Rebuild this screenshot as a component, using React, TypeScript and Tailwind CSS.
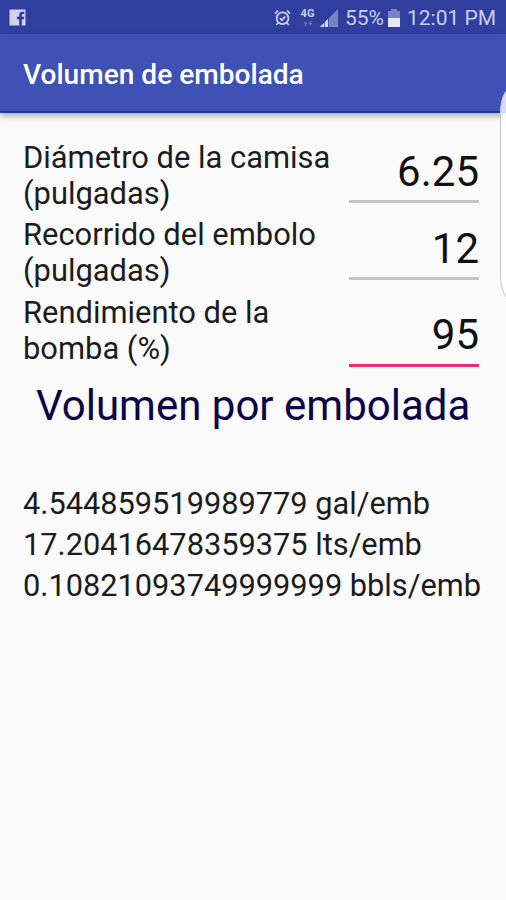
const ROWS = [
  { lines: ['Diámetro de la camisa', '(pulgadas)'], value: '6.25', height: 'h-[77px]', field: 'h-[62px] pt-[6px]', line: 'bg-[#c4c4c5]' },
  { lines: ['Recorrido del embolo', '(pulgadas)'], value: '12', height: 'h-[78px]', field: 'h-[62px] pt-[6px]', line: 'bg-[#c4c4c5]' },
  { lines: ['Rendimiento de la', 'bomba (%)'], value: '95', height: 'h-[73px]', field: 'h-[71px] pt-[14px]', line: 'bg-[#f02a72]' },
];

const RESULTS = ['4.544859519989779 gal/emb', '17.20416478359375 lts/emb', '0.10821093749999999 bbls/emb'];

function StatusBar() {
  return (
    <div className="flex h-[34px] items-center justify-between bg-[#303f9f] pt-[1px] pr-[10px] pl-[9px] text-[#c9cdee]">
      <svg width="17" height="17" viewBox="0 0 17 17">
        <path fill="#d0d4f0" d="M0.5 0.5h16v16h-3.6v-6.3h2l.4-2.5h-2.4V6.2c0-.8.3-1.2 1.2-1.2h1.2V2.8h-2c-2.1 0-3.1 1.2-3.1 3.1v1.8H7.9v2.5h2.3v6.3H0.5z" />
      </svg>
      <div className="flex h-full items-center">
        <svg className="mr-[9px]" width="17" height="18" viewBox="0 0 17 18" fill="none" stroke="#d0d4f0" strokeWidth="1.7">
          <circle cx="8.5" cy="9.3" r="5.9" />
          <path d="M5.9 9.2l2 2 3.4-3.8M1 4.6l3-2.9M16 4.6l-3-2.9M4.2 13.8l-2 2.2M12.8 13.8l2 2.2" />
        </svg>
        <div className="mr-[5px] flex w-[15px] flex-col items-center">
          <span className="text-[11px] leading-[10px] font-bold">4G</span>
          <svg className="mt-[2px]" width="10" height="5" viewBox="0 0 10 5" fill="#6873bd">
            <path d="M2.5 0l2 3H3.3v2H1.7V3H.5zM7.5 5l2-3H8.3V0H6.7v2H5.5z" />
          </svg>
        </div>
        <svg className="mr-[7px]" width="18" height="18" viewBox="0 0 18 18">
          <path fill="#7882c5" d="M18 0v18H0z" />
          <path fill="#d7daf2" d="M8 10v8H0z" />
          <path stroke="#303f9f" strokeWidth=".7" d="M4.5 13v5M8.5 9v9" />
        </svg>
        <span className="w-[39px] text-[21px] leading-[24px] tracking-[-0.1px] whitespace-nowrap">55%</span>
        <svg className="mr-[7px] ml-[4px]" width="12" height="18" viewBox="0 0 12 18">
          <path fill="#7882c5" d="M3 0h6v2h3v16H0V2h3z" />
          <path fill="#e6e8f8" d="M0 9h12v9H0z" />
        </svg>
        <span className="w-[89px] text-right text-[21px] leading-[24px] whitespace-nowrap">12:01 PM</span>
      </div>
    </div>
  );
}

export default function App() {
  return (
    <div className="relative flex h-[900px] w-[506px] flex-col overflow-hidden bg-[#fafafa] font-[Roboto,sans-serif]">
      <StatusBar />
      <header className="relative h-[79px] border-b-[2px] border-[#1f3ba5] bg-[#3f51b5] pt-[24px] pl-[23px] shadow-[0_3px_6px_rgba(0,0,0,0.32)]">
        <h1 className="text-[28.1px] leading-[34px] font-medium whitespace-nowrap text-white">Volumen de embolada</h1>
      </header>
      <main className="flex flex-col pt-[27px] pr-[27px] pl-[23px] text-[#1c1c1c]">
        {ROWS.map((row) => (
          <div key={row.value} className={`flex justify-between ${row.height}`}>
            <div className="text-[30.9px] leading-[36.4px] whitespace-nowrap">
              {row.lines.map((line) => (
                <div key={line}>{line}</div>
              ))}
            </div>
            <div className={`flex w-[130px] flex-col justify-between ${row.field} mt-[1px]`}>
              <div className="text-right text-[42px] leading-[50px] whitespace-nowrap text-[#111]">{row.value}</div>
              <div className={`h-[3px] shrink-0 ${row.line}`} />
            </div>
          </div>
        ))}
        <h2 className="mt-[13px] ml-[13px] text-[42px] leading-[50px] whitespace-nowrap text-[#0b0447]">Volumen por embolada</h2>
        <div className="mt-[52px] text-[30.75px] leading-[41.2px]">
          {RESULTS.map((result) => (
            <div key={result} className="whitespace-nowrap">{result}</div>
          ))}
        </div>
      </main>
      <div className="absolute top-[86px] -right-[22px] h-[216px] w-[28px] rounded-[28px/52px] border border-[#c8c8cc] bg-white/80" />
    </div>
  );
}
